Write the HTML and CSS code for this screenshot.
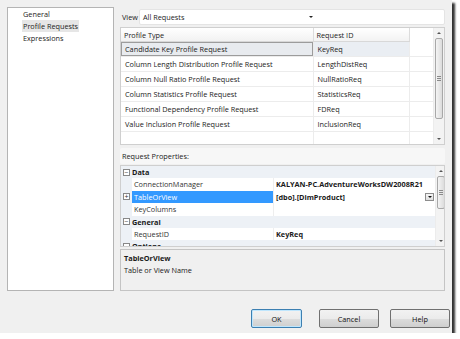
FILE: index.html
```html
<!DOCTYPE html>
<html lang="en">

<head>
    <meta charset="UTF-8">
    <title>Data Profiling Task Editor</title>
    <link rel="stylesheet" href="styles.css">
</head>

<body>
    <div class="dialog">
        <div class="main">
            <ul class="nav">
                <li><span>General</span></li>
                <li><span class="current">Profile Requests</span></li>
                <li><span>Expressions</span></li>
            </ul>
            <div class="pane">
                <div class="view-row">
                    <span class="view-label">View</span>
                    <div class="combo">
                        <span class="combo-text">All Requests</span>
                        <span class="combo-arrow"></span>
                    </div>
                </div>

                <div class="grid">
                    <table class="requests">
                        <colgroup>
                            <col style="width:192px">
                            <col style="width:96px">
                            <col>
                        </colgroup>
                        <thead>
                            <tr>
                                <th>Profile Type</th>
                                <th>Request ID</th>
                                <th class="filler"></th>
                            </tr>
                        </thead>
                        <tbody>
                            <tr class="selected">
                                <td>Candidate Key Profile Request</td>
                                <td>KeyReq</td>
                                <td class="filler"></td>
                            </tr>
                            <tr>
                                <td>Column Length Distribution Profile Request</td>
                                <td>LengthDistReq</td>
                                <td class="filler"></td>
                            </tr>
                            <tr>
                                <td>Column Null Ratio Profile Request</td>
                                <td>NullRatioReq</td>
                                <td class="filler"></td>
                            </tr>
                            <tr>
                                <td>Column Statistics Profile Request</td>
                                <td>StatisticsReq</td>
                                <td class="filler"></td>
                            </tr>
                            <tr>
                                <td>Functional Dependency Profile Request</td>
                                <td>FDReq</td>
                                <td class="filler"></td>
                            </tr>
                            <tr>
                                <td>Value Inclusion Profile Request</td>
                                <td>InclusionReq</td>
                                <td class="filler"></td>
                            </tr>
                            <tr>
                                <td></td>
                                <td></td>
                                <td class="filler"></td>
                            </tr>
                        </tbody>
                    </table>
                    <div class="vscroll">
                        <span class="arrow up"></span>
                        <div class="track">
                            <div class="thumb thumb-grid"><span class="grip"></span></div>
                        </div>
                        <span class="arrow down"></span>
                    </div>
                </div>

                <div class="props-label">Request Properties:</div>

                <div class="props">
                    <div class="prop-list">
                        <div class="prop-row category">
                            <span class="gutter"><span class="toggle">&minus;</span></span>
                            <span class="cat-name">Data</span>
                        </div>
                        <div class="prop-row">
                            <span class="gutter"></span>
                            <span class="name">ConnectionManager</span>
                            <span class="value">KALYAN-PC.AdventureWorksDW2008R21</span>
                        </div>
                        <div class="prop-row">
                            <span class="gutter"><span class="toggle">+</span></span>
                            <span class="name active">TableOrView</span>
                            <span class="value value-edit">
                                <span>[dbo].[DimProduct]</span>
                                <span class="drop-btn"></span>
                            </span>
                        </div>
                        <div class="prop-row">
                            <span class="gutter"></span>
                            <span class="name">KeyColumns</span>
                            <span class="value"></span>
                        </div>
                        <div class="prop-row category">
                            <span class="gutter"><span class="toggle">&minus;</span></span>
                            <span class="cat-name">General</span>
                        </div>
                        <div class="prop-row">
                            <span class="gutter"></span>
                            <span class="name">RequestID</span>
                            <span class="value">KeyReq</span>
                        </div>
                        <div class="prop-row category">
                            <span class="gutter"><span class="toggle">&minus;</span></span>
                            <span class="cat-name">Options</span>
                        </div>
                    </div>
                    <div class="vscroll">
                        <span class="arrow up"></span>
                        <div class="track">
                            <div class="thumb thumb-props"><span class="grip"></span></div>
                        </div>
                        <span class="arrow down"></span>
                    </div>
                </div>

                <div class="desc">
                    <div class="desc-title">TableOrView</div>
                    <div class="desc-text">Table or View Name</div>
                </div>
            </div>
        </div>

        <div class="buttons">
            <button class="btn btn-ok">OK</button>
            <button class="btn btn-cancel">Cancel</button>
            <button class="btn btn-help">Help</button>
        </div>
    </div>
</body>

</html>
```

FILE: styles.css
```css
body {
    margin: 0;
    background: #ffffff;
    font-family: "Open Sans", "Liberation Sans", sans-serif;
    font-size: 7.3px;
    color: #1a1a1a;
}

.dialog {
    width: 452px;
    height: 333px;
    box-sizing: border-box;
    padding: 7px 0 0 7px;
    background: #f0f0f0;
    box-shadow: 3px 3px 2px rgba(0, 0, 0, 0.8);
    display: flex;
    flex-direction: column;
}

.main {
    display: flex;
    gap: 6px;
    height: 284px;
}

/* left page list */
.nav {
    width: 107px;
    box-sizing: border-box;
    margin: 0;
    padding: 0 0 0 14px;
    list-style: none;
    background: #ffffff;
    border: 1px solid #b4b4b4;
}

.nav li {
    height: 12px;
    line-height: 12px;
}

.nav li span {
    padding: 1px 1px;
}

.nav .current {
    background: #e6e6e6;
}

.pane {
    width: 325px;
    display: flex;
    flex-direction: column;
    padding-top: 2px;
}

/* view selector */
.view-row {
    height: 16px;
    display: flex;
    align-items: center;
}

.view-label {
    width: 17px;
    padding-left: 2px;
}

.combo {
    flex: 1;
    height: 16px;
    display: flex;
    align-items: center;
    background: #ffffff;
    border: 1px solid #e4e4e4;
    border-radius: 2px;
    box-sizing: border-box;
    padding-left: 3px;
}

.combo-text {
    width: 166px;
}

.combo-arrow {
    width: 0;
    height: 0;
    border-left: 2px solid transparent;
    border-right: 2px solid transparent;
    border-top: 2px solid #222;
}

/* request grid */
.grid {
    margin-top: 2px;
    height: 118px;
    display: flex;
    background: #ffffff;
    border: 1px solid #cfcfcf;
    box-sizing: border-box;
    overflow: hidden;
}

.requests {
    width: 314px;
    table-layout: fixed;
    border-collapse: collapse;
}

.requests th {
    height: 13px;
    padding: 0 0 0 3px;
    text-align: left;
    font-weight: normal;
    background: linear-gradient(#ffffff, #f2f2f2);
    border-right: 1px solid #dcdcdc;
    border-bottom: 1px solid #d8d8d8;
}

.requests th.filler {
    background: #ffffff;
    border: none;
}

.requests td {
    height: 14px;
    padding: 0 0 0 4px;
    white-space: nowrap;
    overflow: hidden;
    border-right: 1px solid #ececec;
    border-bottom: 1px solid #ececec;
}

.requests td.filler {
    border-right: none;
}

.requests .selected td {
    background: #eaeef3;
}

.requests .selected td:first-child {
    background: #e8ebef;
    box-shadow: inset 0 0 0 1px #9c9c9c;
}

.requests .selected td.filler {
    background: #ffffff;
}

/* scroll bars */
.vscroll {
    width: 10px;
    flex: none;
    display: flex;
    flex-direction: column;
    align-items: center;
    background: #f3f3f3;
    border-left: 1px solid #ececec;
}

.arrow {
    width: 0;
    height: 0;
    margin: 4px 0;
    border-left: 2px solid transparent;
    border-right: 2px solid transparent;
}

.arrow.up {
    border-bottom: 2px solid #555;
}

.arrow.down {
    border-top: 2px solid #555;
}

.track {
    flex: 1;
    width: 100%;
    display: flex;
    flex-direction: column;
    align-items: center;
}

.thumb {
    width: 8px;
    box-sizing: border-box;
    border: 1px solid #a8a8a8;
    border-radius: 2px;
    background: linear-gradient(90deg, #f4f4f4, #dcdcdc);
    display: flex;
    align-items: center;
    justify-content: center;
}

.thumb-grid {
    height: 81px;
}

.thumb-props {
    height: 33px;
}

.grip {
    width: 4px;
    height: 5px;
    background: repeating-linear-gradient(#8a8a8a 0 1px, transparent 1px 2px);
}

/* property grid */
.props-label {
    margin-top: 3px;
    height: 16px;
    line-height: 16px;
    padding-left: 2px;
    background: #f7f7f7;
    border-radius: 2px;
}

.props {
    margin-top: 1px;
    height: 82px;
    display: flex;
    background: #ffffff;
    border: 1px solid #cfcfcf;
    box-sizing: border-box;
    overflow: hidden;
}

.prop-list {
    width: 314px;
    flex: none;
}

.prop-row {
    height: 12.4px;
    line-height: 12.4px;
    display: flex;
    white-space: nowrap;
}

.prop-row .gutter {
    width: 11px;
    flex: none;
    display: flex;
    align-items: center;
    justify-content: center;
    background: #edf1f6;
}

.prop-row.category {
    background: #edf1f6;
    font-weight: bold;
}

.prop-row .name {
    width: 139px;
    flex: none;
    padding-left: 2px;
    color: #333;
}

.prop-row .name.active {
    background: #3399ff;
    color: #ffffff;
}

.prop-row .value {
    flex: 1;
    padding-left: 2px;
    font-weight: bold;
    overflow: hidden;
    border-left: 1px solid #eeeeee;
}

.toggle {
    display: inline-block;
    width: 7px;
    height: 7px;
    line-height: 6px;
    box-sizing: border-box;
    border: 1px solid #888;
    font-size: 7px;
    font-weight: normal;
    color: #333;
    text-align: center;
    background: #ffffff;
}

.value-edit {
    display: flex;
    align-items: center;
    justify-content: space-between;
}

.drop-btn {
    width: 9px;
    height: 8px;
    margin-right: 1px;
    box-sizing: border-box;
    border: 1px solid #8d8d8d;
    background: linear-gradient(#f6f6f6, #dedede);
    display: flex;
    align-items: center;
    justify-content: center;
}

.drop-btn::after {
    content: "";
    border-left: 2px solid transparent;
    border-right: 2px solid transparent;
    border-top: 2px solid #111;
}

/* description */
.desc {
    margin-top: 2px;
    height: 42px;
    box-sizing: border-box;
    padding: 2px 3px;
    border: 1px solid #c4c4c4;
    background: #f0f0f0;
    line-height: 12px;
}

.desc-title {
    font-weight: bold;
}

/* buttons */
.buttons {
    margin-top: 18px;
    display: flex;
    justify-content: flex-end;
    padding-right: 2px;
}

.btn {
    height: 19px;
    padding: 0;
    font-family: inherit;
    font-size: 7.3px;
    color: #111;
    border: 1px solid #707070;
    border-radius: 2px;
    background: linear-gradient(#f2f2f2 0%, #ebebeb 50%, #dddddd 51%, #cfcfcf 100%);
}

.btn-ok {
    width: 51px;
    border-color: #3c7fb1;
    box-shadow: inset 0 0 0 1px #bfe6fd;
}

.btn-cancel {
    width: 60px;
    margin-left: 17px;
}

.btn-help {
    width: 60px;
    margin-left: 11px;
}
```
